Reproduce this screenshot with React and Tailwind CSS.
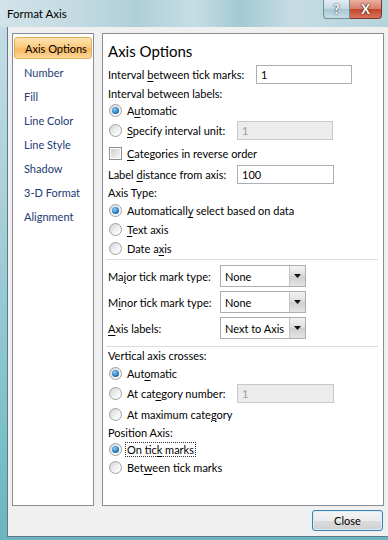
import React from "react";

const U = ({ children }) => <span className="underline underline-offset-[2px] decoration-[1px]">{children}</span>;

function Radio({ checked }) {
  return (
    <span className="w-[13px] h-[13px] rounded-full border border-[#a0a0a0] bg-[linear-gradient(135deg,#d4d4d4,#f4f4f4_60%,#ffffff)] flex items-center justify-center shrink-0">
      {checked && (
        <span className="w-[7px] h-[7px] rounded-full bg-[radial-gradient(circle_at_40%_35%,#8fd0f5,#2a7fc4_55%,#0f3f6c)]" />
      )}
    </span>
  );
}

function Check() {
  return (
    <span className="w-[13px] h-[13px] border border-[#8f8f8f] bg-white flex items-center justify-center shrink-0">
      <span className="w-[9px] h-[9px] bg-[linear-gradient(135deg,#cfcfcf,#f6f6f6)]" />
    </span>
  );
}

function Input({ value, disabled, w }) {
  return (
    <div
      className={
        "h-[19px] border flex items-center pl-[4px] shrink-0 " +
        (disabled ? "border-[#c8c8c8] bg-[#ececec] text-[#9a9a9a] " : "border-[#abadb3] bg-white text-black ") +
        w
      }
    >
      {value}
    </div>
  );
}

function Select({ value }) {
  return (
    <div className="w-[86px] h-[22px] border border-[#abadb3] bg-white flex items-center shrink-0">
      <span className="flex-1 pl-[4px]">{value}</span>
      <span className="w-[16px] h-[20px] border-l border-[#c3c3c3] bg-[linear-gradient(#f4f4f4,#dcdcdc_50%,#cfcfcf_51%,#e4e4e4)] flex items-center justify-center">
        <svg width="7" height="4" viewBox="0 0 7 4"><path d="M0 0H7L3.5 4Z" fill="#111" /></svg>
      </span>
    </div>
  );
}

function RadioRow({ checked, children, h, focus }) {
  return (
    <div className={"flex items-center gap-[5px] pl-[1px] " + h}>
      <Radio checked={checked} />
      <span className={focus ? "border border-dotted border-[#333] px-[1px] -ml-[2px] h-[15px] flex items-center" : ""}>
        <span>{children}</span>
      </span>
    </div>
  );
}

const nav = ["Axis Options", "Number", "Fill", "Line Color", "Line Style", "Shadow", "3-D Format", "Alignment"];

export default function App() {
  return (
    <div className="w-[388px] h-[540px] overflow-hidden whitespace-nowrap bg-[linear-gradient(#c8dee6,#a7cfd8_40%,#7cc0ca_80%,#6cb4bf)] font-['Lato',sans-serif] text-[11px] text-black leading-none">
      {/* Title bar */}
      <div className="h-[27px] flex items-start bg-[linear-gradient(90deg,#d2e3e9,#c3dae2_20%,#aecfd9_35%,#c7dde4_50%,#a2c9d5_62%,#c6dce3_75%,#b5d3dc_100%)]">
        <span className="pl-[7px] pt-[8px] text-[11.5px]">Format Axis</span>
        <div className="ml-auto mr-[6px] flex">
          <div className="w-[27px] h-[19px] rounded-bl-[4px] border border-[#6f8f9b] border-t-0 bg-[linear-gradient(#e3eef2,#c2d8e0_50%,#a9c6d1_51%,#c8dde4)] flex items-center justify-center text-[13px] font-bold text-white [text-shadow:0_0_2px_#304a58,0_0_1px_#304a58]">
            ?
          </div>
          <div className="w-[32px] h-[19px] rounded-br-[4px] border border-[#7a3a30] border-t-0 border-l-0 bg-[linear-gradient(#eab0a2,#d77e69_50%,#c2452c_51%,#d9735a)] flex items-center justify-center text-[13px] font-bold text-white [text-shadow:0_0_2px_#4a1810,0_0_1px_#4a1810]">
            X
          </div>
        </div>
      </div>

      {/* Client */}
      <div className="ml-[7px] h-[510px] bg-[#f0f0f0] border-l border-b border-[#5e7a86] flex flex-col">
        <div className="flex pt-[6px] pl-[4px] gap-[8px]">
          {/* Left nav */}
          <div className="w-[82px] h-[473px] border border-[#8a8e94] bg-white pt-[3px] px-[1px] flex flex-col gap-[2px]">
            {nav.map((n, i) => (
              <div
                key={n}
                className={
                  "h-[22px] flex items-center pl-[10px] text-[#1d3a72] " +
                  (i === 0
                    ? "rounded-[3px] border border-[#e2b15c] bg-[linear-gradient(#fde4b0,#fccb80_45%,#f9b862_55%,#fcd79a)] text-black"
                    : "")
                }
              >
                {n}
              </div>
            ))}
          </div>

          {/* Right panel */}
          <div className="w-[282px] h-[473px] border border-[#8a8e94] bg-white pl-[5px] pr-[5px] pt-[4px] flex flex-col">
            <div className="h-[26px] flex items-center text-[15px]">Axis Options</div>
            <div className="h-[20px] flex items-center">
              <span className="w-[148px]">Interval <U>b</U>etween tick marks:</span>
              <Input value="1" w="w-[96px]" />
            </div>
            <div className="h-[18px] flex items-center">Interval between labels:</div>
            <RadioRow checked h="h-[17px]">A<U>u</U>tomatic</RadioRow>
            <div className="h-[23px] flex items-center gap-[5px] pl-[1px]">
              <Radio />
              <span className="w-[105px]"><U>S</U>pecify interval unit:</span>
              <Input value="1" disabled w="w-[96px]" />
            </div>
            <div className="h-[22px] flex items-center gap-[5px] pl-[1px]">
              <Check />
              <span><U>C</U>ategories in reverse order</span>
            </div>
            <div className="h-[20px] flex items-center">
              <span className="w-[129px]">Label <U>d</U>istance from axis:</span>
              <Input value="100" w="w-[97px]" />
            </div>
            <div className="h-[17px] flex items-center">Axis Type:</div>
            <RadioRow checked h="h-[19px]">Automaticall<U>y</U> select based on data</RadioRow>
            <RadioRow h="h-[19px]"><U>T</U>ext axis</RadioRow>
            <RadioRow h="h-[19px]">Date a<U>x</U>is</RadioRow>
            <div className="h-px bg-[#d8dde2] -ml-[2px] mt-[1px]" />
            <div className="mt-[5px] flex flex-col gap-[4px]">
              <div className="h-[22px] flex items-center">
                <span className="w-[112px]">Ma<U>j</U>or tick mark type:</span>
                <Select value="None" />
              </div>
              <div className="h-[22px] flex items-center">
                <span className="w-[112px]">M<U>i</U>nor tick mark type:</span>
                <Select value="None" />
              </div>
              <div className="h-[22px] flex items-center">
                <span className="w-[112px]"><U>A</U>xis labels:</span>
                <Select value="Next to Axis" />
              </div>
            </div>
            <div className="h-px bg-[#d8dde2] -ml-[2px] mt-[7px]" />
            <div className="h-[17px] flex items-center">Vertical axis crosses:</div>
            <RadioRow checked h="h-[18px]">Aut<U>o</U>matic</RadioRow>
            <div className="h-[23px] flex items-center gap-[5px] pl-[1px]">
              <Radio />
              <span className="w-[105px]">At cat<U>e</U>gory number:</span>
              <Input value="1" disabled w="w-[97px]" />
            </div>
            <RadioRow h="h-[18px]">At maximum cate<U>g</U>ory</RadioRow>
            <div className="h-[19px] flex items-center">Position Axis:</div>
            <RadioRow checked focus h="h-[15px]">On tic<U>k</U> marks</RadioRow>
            <RadioRow h="h-[21px]">Bet<U>w</U>een tick marks</RadioRow>
          </div>
        </div>
        <div className="flex justify-end pr-[5px] pt-[4px]">
          <div className="w-[71px] h-[21px] rounded-[3px] border border-[#3c7fb1] bg-[linear-gradient(#f4f4f4,#ebebeb_50%,#dddddd_51%,#cfcfcf)] shadow-[inset_0_0_0_1px_#d8eefc] flex items-center justify-center">
            Close
          </div>
        </div>
      </div>
    </div>
  );
}
